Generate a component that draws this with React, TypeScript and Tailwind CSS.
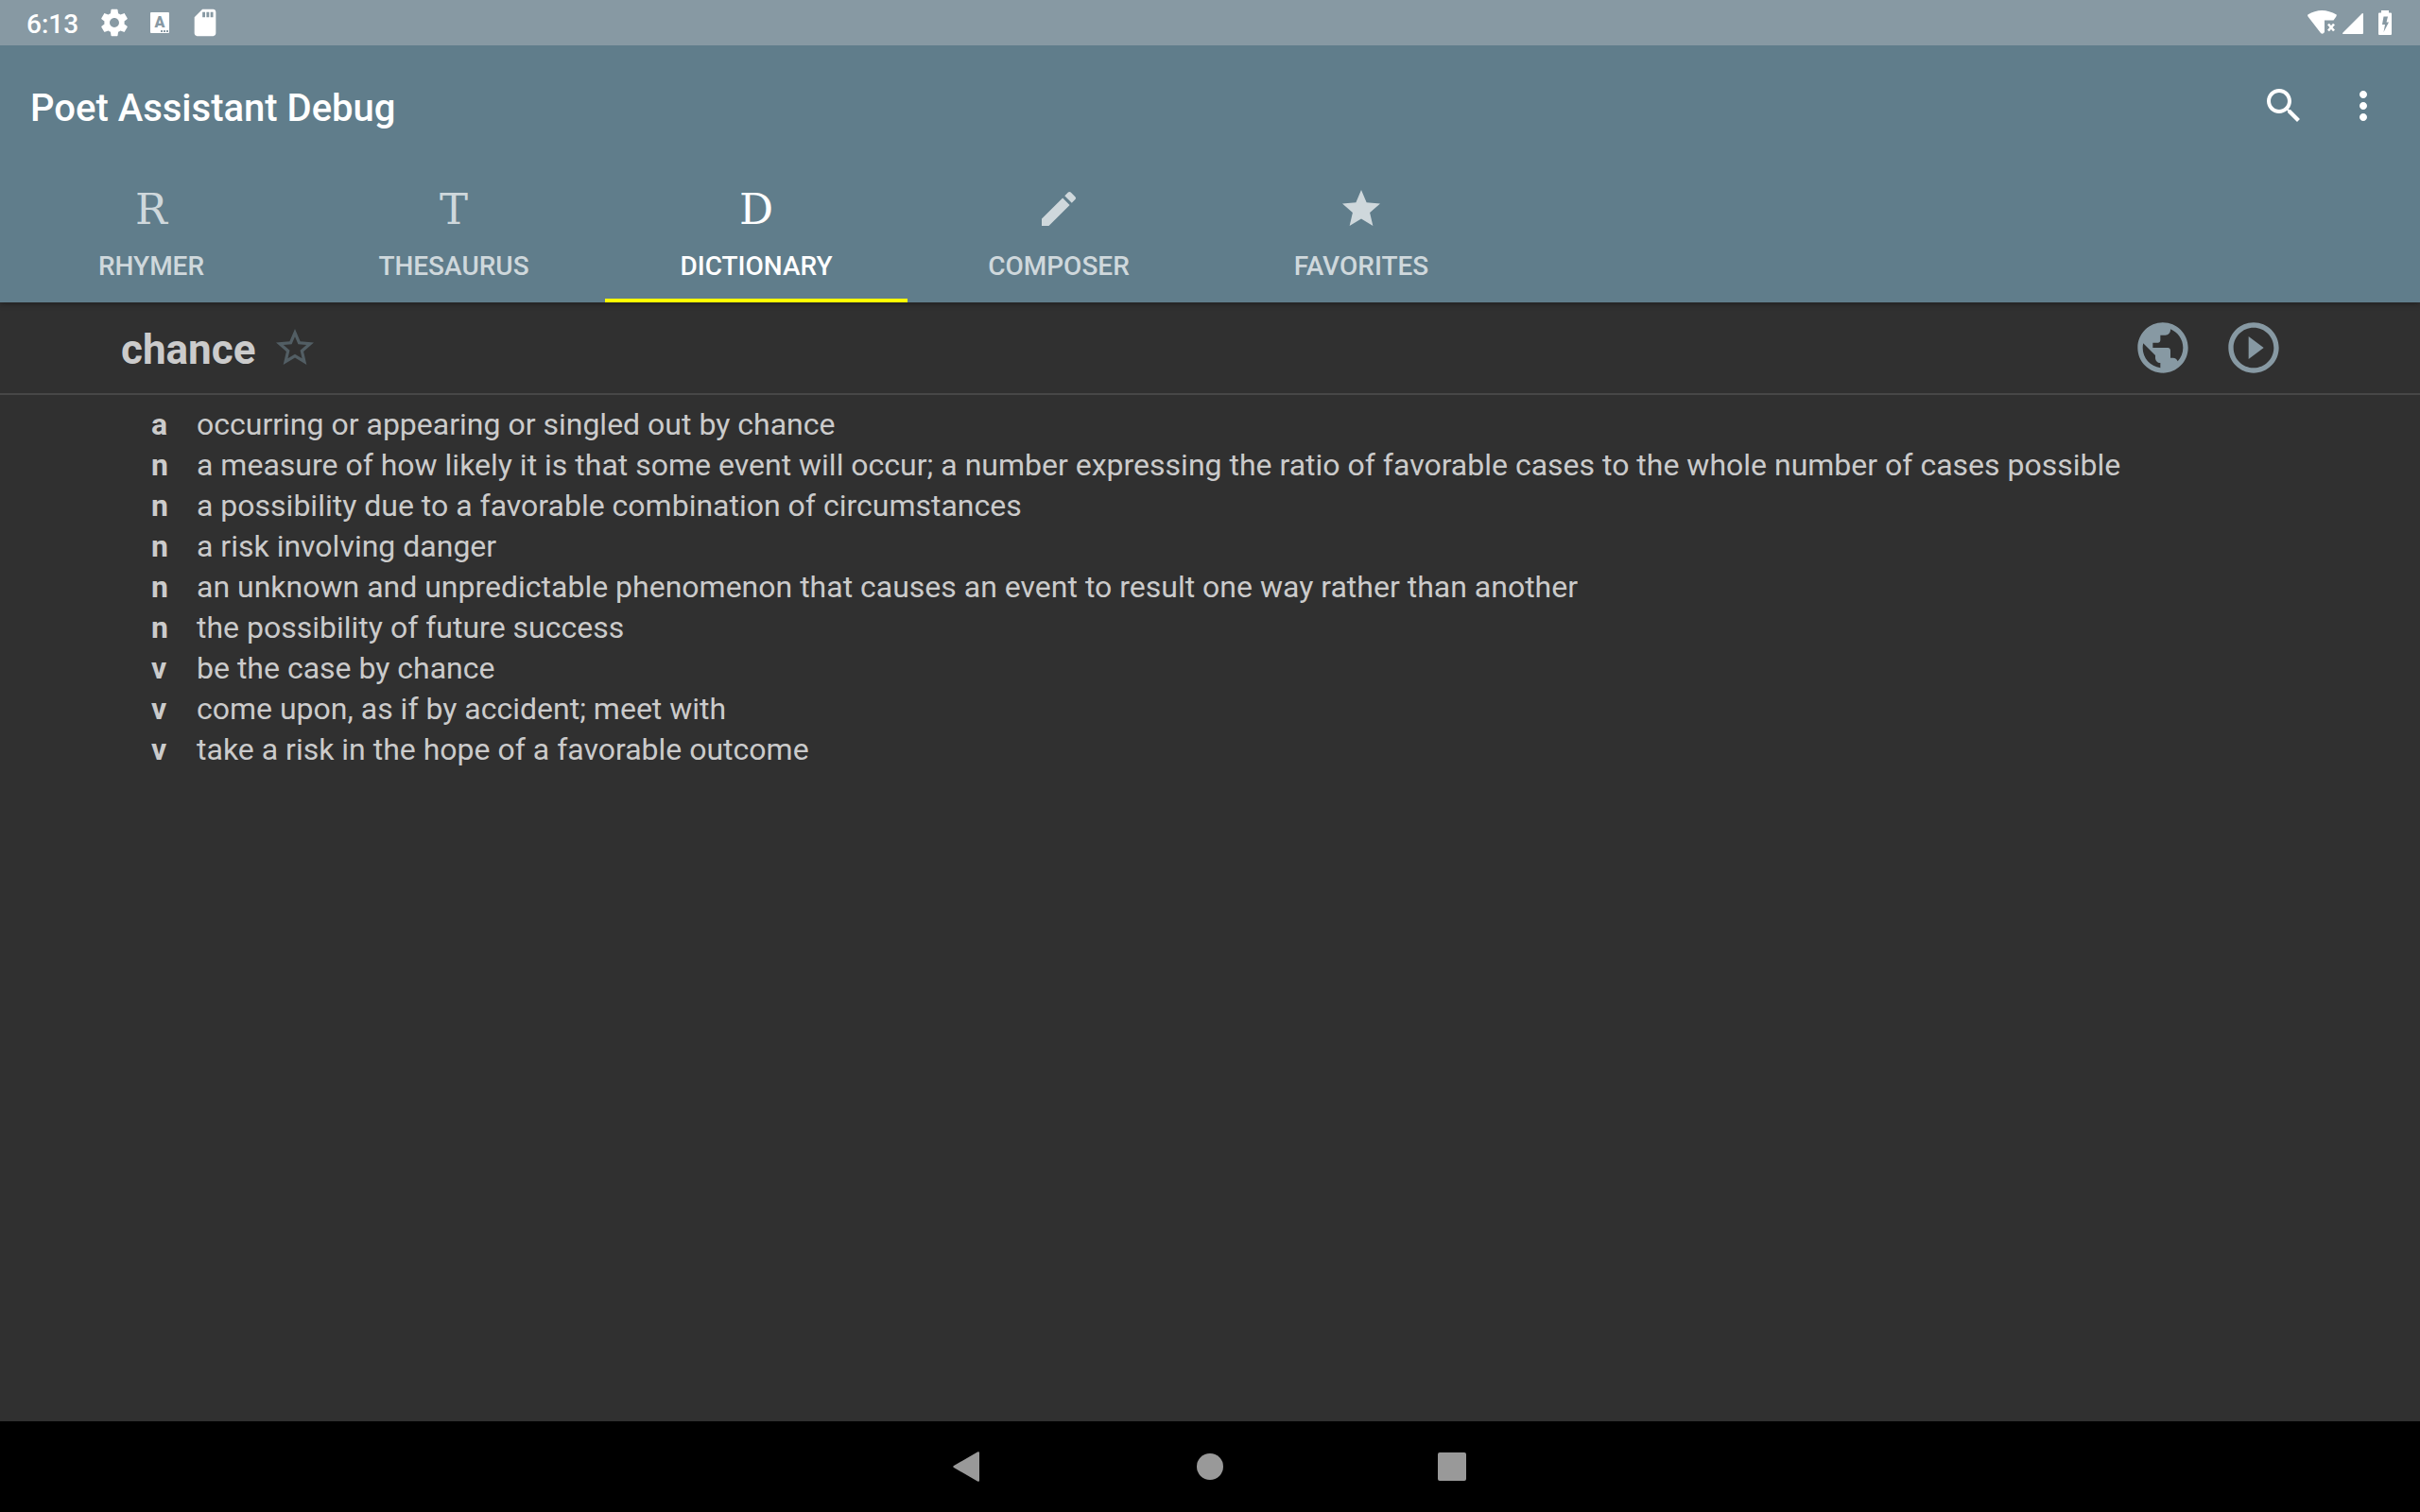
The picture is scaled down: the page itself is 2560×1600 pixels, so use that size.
import React from "react";

const tabs = [
  { label: "Rhymer", letter: "R" },
  { label: "Thesaurus", letter: "T" },
  { label: "Dictionary", letter: "D", active: true },
  {
    label: "Composer",
    path: "M3 17.25V21h3.75L17.81 9.94l-3.75-3.75L3 17.25zM20.71 7.04c.39-.39.39-1.02 0-1.41l-2.34-2.34c-.39-.39-1.02-.39-1.41 0l-1.83 1.83 3.75 3.75 1.83-1.83z",
  },
  {
    label: "Favorites",
    path: "M12 17.27L18.18 21l-1.64-7.03L22 9.24l-7.19-.61L12 2 9.19 8.63 2 9.24l5.46 4.73L5.82 21z",
  },
];

const definitions = [
  ["a", "occurring or appearing or singled out by chance"],
  ["n", "a measure of how likely it is that some event will occur; a number expressing the ratio of favorable cases to the whole number of cases possible"],
  ["n", "a possibility due to a favorable combination of circumstances"],
  ["n", "a risk involving danger"],
  ["n", "an unknown and unpredictable phenomenon that causes an event to result one way rather than another"],
  ["n", "the possibility of future success"],
  ["v", "be the case by chance"],
  ["v", "come upon, as if by accident; meet with"],
  ["v", "take a risk in the hope of a favorable outcome"],
];

function Icon({ d, className }: { d: string; className: string }) {
  return (
    <svg viewBox="0 0 24 24" fill="currentColor" aria-hidden="true" className={className}>
      <path d={d} />
    </svg>
  );
}

function StatusBar() {
  return (
    <div className="flex h-12 items-center justify-between bg-[#8799a3] pl-7 pr-[30px]">
      <div className="flex items-center">
        <span className="mt-1 w-[76px] text-[28px] leading-8 font-medium">6:13</span>
        <Icon
          className="size-[34px]"
          d="M19.43 12.98c.04-.32.07-.64.07-.98s-.03-.66-.07-.98l2.11-1.65c.19-.15.24-.42.12-.64l-2-3.46c-.12-.22-.39-.3-.61-.22l-2.49 1c-.52-.4-1.08-.73-1.69-.98l-.38-2.65C14.46 2.18 14.25 2 14 2h-4c-.25 0-.46.18-.49.42l-.38 2.65c-.61.25-1.17.59-1.69.98l-2.49-1c-.23-.09-.49 0-.61.22l-2 3.46c-.13.22-.07.49.12.64l2.11 1.65c-.04.32-.07.65-.07.98s.03.66.07.98l-2.11 1.65c-.19.15-.24.42-.12.64l2 3.46c.12.22.39.3.61.22l2.49-1c.52.4 1.08.73 1.69.98l.38 2.65c.03.24.24.42.49.42h4c.25 0 .46-.18.49-.42l.38-2.65c.61-.25 1.17-.59 1.69-.98l2.49 1c.23.09.49 0 .61-.22l2-3.46c.12-.22.07-.49-.12-.64l-2.11-1.65zM12 15.5c-1.93 0-3.5-1.57-3.5-3.5s1.57-3.5 3.5-3.5 3.5 1.57 3.5 3.5-1.57 3.5-3.5 3.5z"
        />
        <span className="relative ml-[21px] flex h-[22px] w-5 justify-center rounded-[1px] bg-white text-[16px] leading-[21px] font-black text-[#8799a3]">
          A
          <span className="absolute right-px bottom-px flex gap-px">
            <i className="size-0.5 bg-[#8799a3]" />
            <i className="size-0.5 bg-[#8799a3]" />
            <i className="size-0.5 bg-[#8799a3]" />
          </span>
        </span>
        <Icon
          className="ml-[21px] size-[34px]"
          d="M18 2h-8L4.02 8 4 20c0 1.1.9 2 2 2h12c1.1 0 2-.9 2-2V4c0-1.1-.9-2-2-2zm-6 6h-2V4h2v4zm3 0h-2V4h2v4zm3 0h-2V4h2v4z"
        />
      </div>
      <div className="flex items-center">
        <svg viewBox="0 0 31 26" fill="currentColor" aria-hidden="true" className="h-[26px] w-[31px]">
          <path d="M.3 4.500Q15 -4.500 30.700 4.500Q31 5.500 30 7L27.500 10.500H18V23Q16 26 14 24L.5 6.500Q-.2 5.500 .3 4.500Z" />
          <path d="M22 14.500l6 7M28 14.500l-6 7" stroke="currentColor" strokeWidth="2.600" />
        </svg>
        <svg viewBox="0 0 22 22" fill="currentColor" aria-hidden="true" className="mt-0.5 ml-1.5 size-[22px]">
          <path d="M22 1v20a1 1 0 0 1-1 1H1Q-.5 22 .5 20.500L20.500 .5Q22 -.5 22 1Z" />
        </svg>
        <svg viewBox="0 0 14 26" fill="currentColor" aria-hidden="true" className="ml-4 h-[26px] w-3.5">
          <path fillRule="evenodd" d="M3 0h8v2.500h2a1 1 0 0 1 1 1V25a1 1 0 0 1-1 1H1a1 1 0 0 1-1-1V3.500a1 1 0 0 1 1-1h2ZM5.500 6.500L4 15h3l-1.500 8L11 12.500H8.500L10 6.500Z" />
        </svg>
      </div>
    </div>
  );
}

export default function App() {
  return (
    <div className="flex min-h-screen flex-col bg-[#303030] font-['Roboto',sans-serif] text-white">
      <header className="relative bg-[#607d8b] shadow-[0_2px_6px_rgba(0,0,0,0.3)]">
        <StatusBar />
        <div className="flex h-32 items-center justify-between pr-9 pl-8">
          <h1 className="mt-1.5 text-[40px] leading-12 font-medium">Poet Assistant Debug</h1>
          <div className="flex gap-9">
            <button type="button" aria-label="Search">
              <Icon
                className="size-12"
                d="M15.5 14h-.79l-.28-.27C15.41 12.59 16 11.11 16 9.500 16 5.910 13.090 3 9.500 3S3 5.910 3 9.500 5.910 16 9.500 16c1.610 0 3.090-.59 4.230-1.570l.27.28v.79l5 4.990L20.490 19l-4.990-5zm-6 0C7.010 14 5 11.990 5 9.500S7.010 5 9.500 5 14 7.010 14 9.500 11.990 14 9.500 14z"
              />
            </button>
            <button type="button" aria-label="More options">
              <Icon
                className="size-12"
                d="M12 8c1.100 0 2-.9 2-2s-.9-2-2-2-2 .9-2 2 .9 2 2 2zm0 2c-1.100 0-2 .9-2 2s.9 2 2 2 2-.9 2-2-.9-2-2-2zm0 6c-1.100 0-2 .9-2 2s.9 2 2 2 2-.9 2-2-.9-2-2-2z"
              />
            </button>
          </div>
        </div>
        <nav role="tablist" className="flex h-36">
          {tabs.map((t) => (
            <button
              key={t.label}
              type="button"
              role="tab"
              aria-selected={!!t.active}
              className={
                t.active
                  ? "flex w-80 flex-col items-center border-b-4 border-[#ffff00] pt-[21px] text-white"
                  : "flex w-80 flex-col items-center border-b-4 border-transparent pt-[21px] text-[#cfd8dc]"
              }
            >
              {t.path ? (
                <Icon className="size-12" d={t.path} />
              ) : (
                <span className="h-12 font-['DejaVu_Serif',serif] text-[45px] leading-[50px]">{t.letter}</span>
              )}
              <span className="mt-[21px] text-[28px] leading-8 font-medium uppercase">{t.label}</span>
            </button>
          ))}
        </nav>
      </header>
      <main className="grow text-[#cbcbcb]">
        <div className="flex h-[98px] items-center border-b-2 border-[#474747] px-32">
          <h2 className="mt-1 text-[44px] leading-[52px] font-bold">chance</h2>
          <button type="button" aria-label="Add to favorites" className="ml-[18px] text-[#525e64]">
            <Icon
              className="size-12"
              d="M22 9.240l-7.190-.62L12 2 9.190 8.630 2 9.240l5.460 4.730L5.820 21 12 17.270 18.180 21l-1.630-7.030L22 9.240zM12 15.400l-3.760 2.270 1-4.280-3.320-2.880 4.380-.38L12 6.100l1.710 4.040 4.380.38-3.320 2.880 1 4.280L12 15.400z"
            />
          </button>
          <div className="ml-auto flex text-[#8799a3]">
            <button type="button" aria-label="Look up on the web" className="flex size-24 items-center justify-center">
              <Icon
                className="size-16"
                d="M12 2C6.480 2 2 6.480 2 12s4.480 10 10 10 10-4.480 10-10S17.520 2 12 2zm-1 17.930c-3.950-.49-7-3.850-7-7.930 0-.62.080-1.210.210-1.790L9 15v1c0 1.100.9 2 2 2v1.930zm6.900-2.540c-.26-.81-1-1.390-1.900-1.390h-1v-3c0-.55-.45-1-1-1H8v-2h2c.55 0 1-.45 1-1V7h2c1.100 0 2-.9 2-2v-.41c2.930 1.190 5 4.060 5 7.410 0 2.080-.8 3.970-2.100 5.390z"
              />
            </button>
            <button type="button" aria-label="Play" className="flex size-24 items-center justify-center">
              <Icon
                className="size-16"
                d="M10 16.500l6-4.500-6-4.500v9zM12 2C6.480 2 2 6.480 2 12s4.480 10 10 10 10-4.480 10-10S17.520 2 12 2zm0 18c-4.410 0-8-3.590-8-8s3.590-8 8-8 8 3.590 8 8-3.590 8-8 8z"
              />
            </button>
          </div>
        </div>
        <dl className="px-40 pt-[10px] text-[32px] leading-[43px]">
          {definitions.map(([part, text]) => (
            <div key={text} className="flex">
              <dt className="w-12 shrink-0 font-bold">{part}</dt>
              <dd>{text}</dd>
            </div>
          ))}
        </dl>
      </main>
      <footer className="flex h-24 items-center justify-center gap-[208px] bg-black text-[#999999]">
        <button type="button" aria-label="Back">
          <svg viewBox="0 0 48 48" fill="currentColor" aria-hidden="true" className="size-12">
            <path d="M9 23L34.500 8.300Q36 7.800 36 9.500V38.500Q36 40.200 34.500 39.700L9 25Q7.500 24 9 23Z" />
          </svg>
        </button>
        <button type="button" aria-label="Home">
          <svg viewBox="0 0 48 48" fill="currentColor" aria-hidden="true" className="size-12">
            <circle cx="24" cy="24" r="14" />
          </svg>
        </button>
        <button type="button" aria-label="Recent apps">
          <svg viewBox="0 0 48 48" fill="currentColor" aria-hidden="true" className="size-12">
            <rect x="9" y="9" width="30" height="30" rx="2" />
          </svg>
        </button>
      </footer>
    </div>
  );
}
